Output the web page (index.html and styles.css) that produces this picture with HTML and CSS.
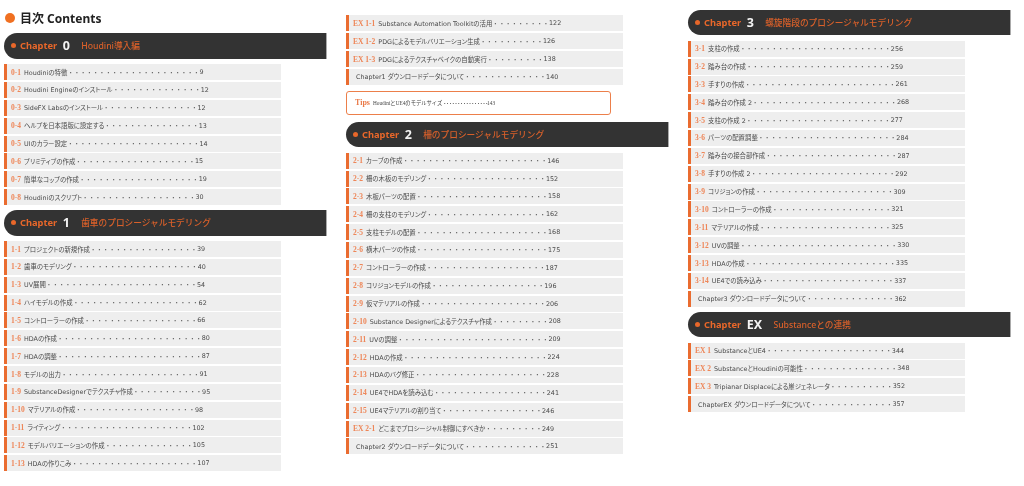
FILE: index.html
```html
<!DOCTYPE html>
<html lang="ja">
<head>
<meta charset="utf-8">
<title>目次 Contents</title>
<link rel="stylesheet" href="styles.css">
</head>
<body>
<main class="page">
<section class="column column-first">
  <h1 class="toc-title"><span class="toc-mark"></span>目次 Contents</h1>
  <h2 class="banner"><span class="banner-dot"></span><span class="banner-ch">Chapter</span><span class="banner-no">0</span><span class="banner-name">Houdini導入編</span></h2>
  <ul class="rows">
    <li class="row"><b class="num">0-1</b><span class="name">Houdiniの特徴</span><span class="dots">・・・・・・・・・・・・・・・・・・・・・</span><span class="pg">9</span></li>
    <li class="row"><b class="num">0-2</b><span class="name">Houdini Engineのインストール</span><span class="dots">・・・・・・・・・・・・・・</span><span class="pg">12</span></li>
    <li class="row"><b class="num">0-3</b><span class="name">SideFX Labsのインストール</span><span class="dots">・・・・・・・・・・・・・・・</span><span class="pg">12</span></li>
    <li class="row"><b class="num">0-4</b><span class="name">ヘルプを日本語版に設定する</span><span class="dots">・・・・・・・・・・・・・・・</span><span class="pg">13</span></li>
    <li class="row"><b class="num">0-5</b><span class="name">UIのカラー設定</span><span class="dots">・・・・・・・・・・・・・・・・・・・・・</span><span class="pg">14</span></li>
    <li class="row"><b class="num">0-6</b><span class="name">プリミティブの作成</span><span class="dots">・・・・・・・・・・・・・・・・・・・</span><span class="pg">15</span></li>
    <li class="row"><b class="num">0-7</b><span class="name">簡単なコップの作成</span><span class="dots">・・・・・・・・・・・・・・・・・・・</span><span class="pg">19</span></li>
    <li class="row"><b class="num">0-8</b><span class="name">Houdiniのスクリプト</span><span class="dots">・・・・・・・・・・・・・・・・・・</span><span class="pg">30</span></li>
  </ul>
  <h2 class="banner banner-next"><span class="banner-dot"></span><span class="banner-ch">Chapter</span><span class="banner-no">1</span><span class="banner-name">歯車のプロシージャルモデリング</span></h2>
  <ul class="rows">
    <li class="row"><b class="num">1-1</b><span class="name">プロジェクトの新規作成</span><span class="dots">・・・・・・・・・・・・・・・・・</span><span class="pg">39</span></li>
    <li class="row"><b class="num">1-2</b><span class="name">歯車のモデリング</span><span class="dots">・・・・・・・・・・・・・・・・・・・・</span><span class="pg">40</span></li>
    <li class="row"><b class="num">1-3</b><span class="name">UV展開</span><span class="dots">・・・・・・・・・・・・・・・・・・・・・・・・</span><span class="pg">54</span></li>
    <li class="row"><b class="num">1-4</b><span class="name">ハイモデルの作成</span><span class="dots">・・・・・・・・・・・・・・・・・・・・</span><span class="pg">62</span></li>
    <li class="row"><b class="num">1-5</b><span class="name">コントローラーの作成</span><span class="dots">・・・・・・・・・・・・・・・・・・</span><span class="pg">66</span></li>
    <li class="row"><b class="num">1-6</b><span class="name">HDAの作成</span><span class="dots">・・・・・・・・・・・・・・・・・・・・・・・</span><span class="pg">80</span></li>
    <li class="row"><b class="num">1-7</b><span class="name">HDAの調整</span><span class="dots">・・・・・・・・・・・・・・・・・・・・・・・</span><span class="pg">87</span></li>
    <li class="row"><b class="num">1-8</b><span class="name">モデルの出力</span><span class="dots">・・・・・・・・・・・・・・・・・・・・・・</span><span class="pg">91</span></li>
    <li class="row"><b class="num">1-9</b><span class="name">SubstanceDesignerでテクスチャ作成</span><span class="dots">・・・・・・・・・・・</span><span class="pg">95</span></li>
    <li class="row"><b class="num">1-10</b><span class="name">マテリアルの作成</span><span class="dots">・・・・・・・・・・・・・・・・・・・</span><span class="pg">98</span></li>
    <li class="row"><b class="num">1-11</b><span class="name">ライティング</span><span class="dots">・・・・・・・・・・・・・・・・・・・・・</span><span class="pg">102</span></li>
    <li class="row"><b class="num">1-12</b><span class="name">モデルバリエーションの作成</span><span class="dots">・・・・・・・・・・・・・・</span><span class="pg">105</span></li>
    <li class="row"><b class="num">1-13</b><span class="name">HDAの作りこみ</span><span class="dots">・・・・・・・・・・・・・・・・・・・・</span><span class="pg">107</span></li>
  </ul>
</section>
<section class="column column-second">
  <ul class="rows">
    <li class="row"><b class="num">EX 1-1</b><span class="name">Substance Automation Toolkitの活用</span><span class="dots">・・・・・・・・・</span><span class="pg">122</span></li>
    <li class="row"><b class="num">EX 1-2</b><span class="name">PDGによるモデルバリエーション生成</span><span class="dots">・・・・・・・・・・</span><span class="pg">126</span></li>
    <li class="row"><b class="num">EX 1-3</b><span class="name">PDGによるテクスチャベイクの自動実行</span><span class="dots">・・・・・・・・・</span><span class="pg">138</span></li>
    <li class="row row-plain"><span class="name">Chapter1 ダウンロードデータについて</span><span class="dots">・・・・・・・・・・・・・</span><span class="pg">140</span></li>
  </ul>
  <p class="tips"><b class="tips-label">Tips</b><span class="tips-text">HoudiniとUE4のモデルサイズ</span><span class="tips-dots">・・・・・・・・・・・・・・・・</span><span class="tips-text">143</span></p>
  <h2 class="banner banner-tips"><span class="banner-dot"></span><span class="banner-ch">Chapter</span><span class="banner-no">2</span><span class="banner-name">柵のプロシージャルモデリング</span></h2>
  <ul class="rows">
    <li class="row"><b class="num">2-1</b><span class="name">カーブの作成</span><span class="dots">・・・・・・・・・・・・・・・・・・・・・・・</span><span class="pg">146</span></li>
    <li class="row"><b class="num">2-2</b><span class="name">柵の木板のモデリング</span><span class="dots">・・・・・・・・・・・・・・・・・・・</span><span class="pg">152</span></li>
    <li class="row"><b class="num">2-3</b><span class="name">木板パーツの配置</span><span class="dots">・・・・・・・・・・・・・・・・・・・・・</span><span class="pg">158</span></li>
    <li class="row"><b class="num">2-4</b><span class="name">柵の支柱のモデリング</span><span class="dots">・・・・・・・・・・・・・・・・・・・</span><span class="pg">162</span></li>
    <li class="row"><b class="num">2-5</b><span class="name">支柱モデルの配置</span><span class="dots">・・・・・・・・・・・・・・・・・・・・・</span><span class="pg">168</span></li>
    <li class="row"><b class="num">2-6</b><span class="name">横木パーツの作成</span><span class="dots">・・・・・・・・・・・・・・・・・・・・・</span><span class="pg">175</span></li>
    <li class="row"><b class="num">2-7</b><span class="name">コントローラーの作成</span><span class="dots">・・・・・・・・・・・・・・・・・・・</span><span class="pg">187</span></li>
    <li class="row"><b class="num">2-8</b><span class="name">コリジョンモデルの作成</span><span class="dots">・・・・・・・・・・・・・・・・・・</span><span class="pg">196</span></li>
    <li class="row"><b class="num">2-9</b><span class="name">仮マテリアルの作成</span><span class="dots">・・・・・・・・・・・・・・・・・・・・</span><span class="pg">206</span></li>
    <li class="row"><b class="num">2-10</b><span class="name">Substance Designerによるテクスチャ作成</span><span class="dots">・・・・・・・・・</span><span class="pg">208</span></li>
    <li class="row"><b class="num">2-11</b><span class="name">UVの調整</span><span class="dots">・・・・・・・・・・・・・・・・・・・・・・・・</span><span class="pg">209</span></li>
    <li class="row"><b class="num">2-12</b><span class="name">HDAの作成</span><span class="dots">・・・・・・・・・・・・・・・・・・・・・・・</span><span class="pg">224</span></li>
    <li class="row"><b class="num">2-13</b><span class="name">HDAのバグ修正</span><span class="dots">・・・・・・・・・・・・・・・・・・・・・</span><span class="pg">228</span></li>
    <li class="row"><b class="num">2-14</b><span class="name">UE4でHDAを読み込む</span><span class="dots">・・・・・・・・・・・・・・・・・・</span><span class="pg">241</span></li>
    <li class="row"><b class="num">2-15</b><span class="name">UE4マテリアルの割り当て</span><span class="dots">・・・・・・・・・・・・・・・・</span><span class="pg">246</span></li>
    <li class="row"><b class="num">EX 2-1</b><span class="name">どこまでプロシージャル制御にすべきか</span><span class="dots">・・・・・・・・・</span><span class="pg">249</span></li>
    <li class="row row-plain"><span class="name">Chapter2 ダウンロードデータについて</span><span class="dots">・・・・・・・・・・・・・</span><span class="pg">251</span></li>
  </ul>
</section>
<section class="column column-third">
  <h2 class="banner"><span class="banner-dot"></span><span class="banner-ch">Chapter</span><span class="banner-no">3</span><span class="banner-name">螺旋階段のプロシージャルモデリング</span></h2>
  <ul class="rows">
    <li class="row"><b class="num">3-1</b><span class="name">支柱の作成</span><span class="dots">・・・・・・・・・・・・・・・・・・・・・・・・</span><span class="pg">256</span></li>
    <li class="row"><b class="num">3-2</b><span class="name">踏み台の作成</span><span class="dots">・・・・・・・・・・・・・・・・・・・・・・・</span><span class="pg">259</span></li>
    <li class="row"><b class="num">3-3</b><span class="name">手すりの作成</span><span class="dots">・・・・・・・・・・・・・・・・・・・・・・・・</span><span class="pg">261</span></li>
    <li class="row"><b class="num">3-4</b><span class="name">踏み台の作成 2</span><span class="dots">・・・・・・・・・・・・・・・・・・・・・・・</span><span class="pg">268</span></li>
    <li class="row"><b class="num">3-5</b><span class="name">支柱の作成 2</span><span class="dots">・・・・・・・・・・・・・・・・・・・・・・・</span><span class="pg">277</span></li>
    <li class="row"><b class="num">3-6</b><span class="name">パーツの配置調整</span><span class="dots">・・・・・・・・・・・・・・・・・・・・・・</span><span class="pg">284</span></li>
    <li class="row"><b class="num">3-7</b><span class="name">踏み台の接合部作成</span><span class="dots">・・・・・・・・・・・・・・・・・・・・・</span><span class="pg">287</span></li>
    <li class="row"><b class="num">3-8</b><span class="name">手すりの作成 2</span><span class="dots">・・・・・・・・・・・・・・・・・・・・・・・</span><span class="pg">292</span></li>
    <li class="row"><b class="num">3-9</b><span class="name">コリジョンの作成</span><span class="dots">・・・・・・・・・・・・・・・・・・・・・・</span><span class="pg">309</span></li>
    <li class="row"><b class="num">3-10</b><span class="name">コントローラーの作成</span><span class="dots">・・・・・・・・・・・・・・・・・・・</span><span class="pg">321</span></li>
    <li class="row"><b class="num">3-11</b><span class="name">マテリアルの作成</span><span class="dots">・・・・・・・・・・・・・・・・・・・・・</span><span class="pg">325</span></li>
    <li class="row"><b class="num">3-12</b><span class="name">UVの調整</span><span class="dots">・・・・・・・・・・・・・・・・・・・・・・・・・</span><span class="pg">330</span></li>
    <li class="row"><b class="num">3-13</b><span class="name">HDAの作成</span><span class="dots">・・・・・・・・・・・・・・・・・・・・・・・・</span><span class="pg">335</span></li>
    <li class="row"><b class="num">3-14</b><span class="name">UE4での読み込み</span><span class="dots">・・・・・・・・・・・・・・・・・・・・・</span><span class="pg">337</span></li>
    <li class="row row-plain"><span class="name">Chapter3 ダウンロードデータについて</span><span class="dots">・・・・・・・・・・・・・・</span><span class="pg">362</span></li>
  </ul>
  <h2 class="banner banner-next"><span class="banner-dot"></span><span class="banner-ch">Chapter</span><span class="banner-no">EX</span><span class="banner-name">Substanceとの連携</span></h2>
  <ul class="rows">
    <li class="row"><b class="num">EX 1</b><span class="name">SubstanceとUE4</span><span class="dots">・・・・・・・・・・・・・・・・・・・・</span><span class="pg">344</span></li>
    <li class="row"><b class="num">EX 2</b><span class="name">SubstanceとHoudiniの可能性</span><span class="dots">・・・・・・・・・・・・・・・</span><span class="pg">348</span></li>
    <li class="row"><b class="num">EX 3</b><span class="name">Tripianar Displaceによる崖ジェネレータ</span><span class="dots">・・・・・・・・・・</span><span class="pg">352</span></li>
    <li class="row row-plain"><span class="name">ChapterEX ダウンロードデータについて</span><span class="dots">・・・・・・・・・・・・・</span><span class="pg">357</span></li>
  </ul>
</section>
</main>
</body>
</html>
```
FILE: styles.css
```css
* { box-sizing: border-box; }
html, body { margin: 0; padding: 0; background: #fff; }
body { width: 1024px; height: 486px; overflow: hidden; font-family: "DejaVu Sans", "Noto Sans CJK JP", sans-serif; color: #444; }
.page { display: flex; gap: 19px; padding-left: 4px; filter: blur(0.35px); }
.column { width: 323px; flex: none; }
.column-first { padding-top: 10px; }
.column-second { padding-top: 15.3px; }
.column-third { padding-top: 9.6px; }

.toc-title { display: flex; align-items: center; margin: 0 0 8px 1px; height: 15px; font: 700 12px "Noto Sans", "Noto Sans CJK JP", sans-serif; color: #222; }
.toc-mark { width: 10px; height: 10px; margin-right: 5px; border-radius: 50%; background: #f07021; }

.banner { display: flex; align-items: center; height: 25.6px; margin: 0 0 5.5px; padding-left: 6.5px; background: #333; border: 0 solid #aaa; border-width: 0 1px 0 0; border-radius: 13px 0 0 13px; font: 700 9.3px "Noto Sans", "Noto Sans CJK JP", sans-serif; color: #e8672a; }
.banner-next { margin-top: 4.8px; }
.banner-tips { margin-top: 7px; }
.banner-dot { width: 5px; height: 5px; margin-right: 4.5px; border-radius: 50%; background: #e8672a; }
.banner-ch { color: #e8672a; }
.banner-no { margin: 0 11.3px 0 5.5px; font-size: 12.5px; color: #f4f4f4; }
.banner-name { font-size: 8.7px; font-weight: 500; color: #d9602a; }

.rows { display: flex; flex-direction: column; gap: 1.87px; margin: 0; padding: 0; list-style: none; }
.row { display: flex; align-items: center; width: 277px; height: 16px; padding-left: 4px; background: #eee; border-left: 3px solid #ea6c30; font-size: 6.4px; white-space: nowrap; }
.row-plain { padding-left: 7px; }
.num { margin-right: 3px; font: 700 7.5px "Liberation Serif", serif; color: #ee8658; }
.name { font-feature-settings: "palt"; color: #4a4a4a; }
.dots { font-family: "Noto Sans CJK JP", sans-serif; font-size: 6.3px; color: #555; }
.pg { color: #4a4a4a; }

.tips { display: flex; align-items: center; width: 265px; height: 24px; margin: 5.7px 0 0; padding-left: 8px; background: #fff; border: 1px solid #ec7f4a; border-radius: 3px; font-family: "Liberation Serif", "Noto Sans CJK JP", serif; }
.tips-label { margin-right: 3px; font-size: 8px; color: #ea7b4a; }
.tips-text { font-size: 5.3px; color: #444; }
.tips-dots { font-size: 5px; letter-spacing: -2.2px; color: #444; }
```
